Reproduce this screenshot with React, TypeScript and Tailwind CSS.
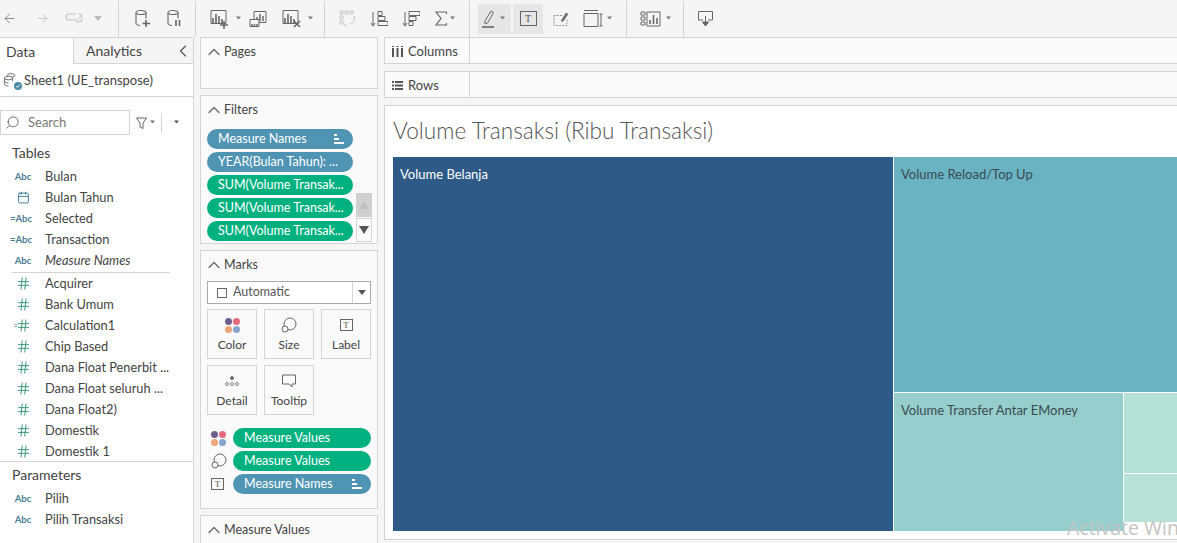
import React from 'react';
import { ArrowLeft, ArrowRight, ChevronLeft, ChevronUp, Search, Calendar, Hash } from 'lucide-react';

const Caret = ({ color = '#777' }: { color?: string }) => (
  <svg width="8" height="5" viewBox="0 0 8 5" className="ml-px"><path d="M0 0h8L4 5z" fill={color} /></svg>
);

const SmallCaret = ({ color = '#777' }: { color?: string }) => (
  <svg width="8" height="5" viewBox="0 0 8 5" className="ml-px"><path d="M1 .5h5L3.500 3.500z" fill={color} /></svg>
);

const Sep = ({ ml }: { ml: string }) => <div className={`h-9 w-px bg-[#d4d4d4] ${ml}`} />;

const DbIcon = ({ kind }: { kind: 'add' | 'pause' }) => (
  <svg width="16" height="20" viewBox="0 0 16 20" fill="none" stroke="#666" strokeWidth="1.1">
    <ellipse cx="6" cy="3.500" rx="5" ry="2" />
    <path d="M1 3.500v11c0 1 2 2 4 2M11 3.500v6" />
    {kind === 'add' ? (
      <path d="M11 11v7M7.500 14.500h7.500" strokeWidth="1.6" />
    ) : (
      <path d="M9 11v6M12.500 11v6" strokeWidth="1.6" />
    )}
  </svg>
);

const SheetBars = () => (
  <path d="M3 15V9M6 15V5M9 15V7M12 15V10" stroke="#666" strokeWidth="1.6" />
);

const Toolbar = () => (
  <div className="flex h-[37px] items-center bg-[#f5f5f5]">
    <ArrowLeft size={15} strokeWidth={1.2} color="#666" className="ml-[2px]" />
    <ArrowRight size={15} strokeWidth={1.2} color="#bbb" className="ml-[18px]" />
    <svg width="19" height="12" viewBox="0 0 19 12" fill="none" stroke="#c4c4c4" strokeWidth="1.1" className="ml-[15px]">
      <path d="M14 7H4a3 3 0 0 1 0-6h7M11 9h3a3 3 0 0 0 3-3V5M14 0l3 3-3 2" />
    </svg>
    <div className="ml-[9px]"><Caret color="#bbb" /></div>
    <Sep ml="ml-[16px]" />
    <div className="ml-[16px] flex"><DbIcon kind="add" /></div>
    <div className="ml-[16px] flex"><DbIcon kind="pause" /></div>
    <Sep ml="ml-[12px]" />
    <svg width="24" height="20" viewBox="0 0 24 20" fill="none" stroke="#666" className="ml-[14px]">
      <path d="M1 1.500h15v13H1z" />
      <SheetBars />
      <path d="M14 12v8M10 16h8" strokeWidth="1.6" />
    </svg>
    <SmallCaret />
    <svg width="18" height="18" viewBox="0 0 18 18" fill="none" stroke="#666" className="ml-[6px]">
      <path d="M5 1.500h12v11H5z" fill="#f5f5f5" />
      <path d="M8 11V7M11 11V4M14 11V6" strokeWidth="1.5" />
      <path d="M1 9.500h9v7H1z" fill="#f5f5f5" />
      <path d="M3 16v-2M5.500 16v-2M8 16v-2" strokeWidth="1.5" />
    </svg>
    <svg width="24" height="20" viewBox="0 0 24 20" fill="none" stroke="#666" className="ml-[15px]">
      <path d="M1 1.500h15v13H1z" />
      <SheetBars />
      <path d="M12 12l6 6M18 12l-6 6" strokeWidth="1.6" />
    </svg>
    <SmallCaret />
    <Sep ml="ml-[9px]" />
    <svg width="17" height="17" viewBox="0 0 17 17" fill="none" stroke="#c4c4c4" className="ml-[14px]">
      <path d="M1 1h3v3H1zM6 1h3v3H6zM11 1h3v3h-3zM1 6h3v3H1zM1 11h3v3H1z" />
      <path d="M15 7c1 3 0 6-4 7M15 6l1 2M5 16l3-2" />
    </svg>
    <svg width="18" height="18" viewBox="0 0 18 18" fill="none" stroke="#666" className="ml-[14px]">
      <path d="M3 2v14M1 13l2 3 2-3" />
      <path d="M8 1.500h4v4H8zM8 6.500h7v4H8zM8 11.500h10v4H8z" />
    </svg>
    <svg width="18" height="18" viewBox="0 0 18 18" fill="none" stroke="#666" className="ml-[14px]">
      <path d="M3 2v14M1 13l2 3 2-3" />
      <path d="M7 1.500h11v4H7zM7 6.500h7v4H7zM7 11.500h4v4H7z" />
    </svg>
    <svg width="12" height="15" viewBox="0 0 12 15" fill="none" stroke="#666" strokeWidth="1.2" className="ml-[15px]">
      <path d="M11.500 3V1H1l5 6.500L1 14h10.500v-2" />
    </svg>
    <div className="ml-px"><SmallCaret /></div>
    <Sep ml="ml-[12px]" />
    <div className="ml-[8px] flex h-[30px] w-[33px] items-center justify-center bg-[#e6e6e6]">
      <svg width="16" height="19" viewBox="0 0 16 19" fill="none" stroke="#666">
        <path d="M3 12L9 2l2.500 1.500L6 13.500 3 15z" />
        <path d="M0 18h12" strokeWidth="1.6" />
      </svg>
      <SmallCaret />
    </div>
    <div className="ml-[2px] flex h-[30px] w-[30px] items-center justify-center bg-[#e6e6e6]">
      <div className="flex h-[15px] w-[17px] items-center justify-center border border-[#666] text-[10px] leading-none text-[#555] [font-family:'Liberation_Serif',serif]">T</div>
    </div>
    <svg width="16" height="16" viewBox="0 0 16 16" fill="none" stroke="#999" className="ml-[10px]">
      <path d="M1 4.500h9M1 4.500v10h13V8" strokeDasharray="2 1" />
      <path d="M8 10l5-8 2 1-5 7.500z" fill="#666" stroke="#666" strokeWidth="0.5" />
    </svg>
    <svg width="20" height="17" viewBox="0 0 20 17" fill="none" stroke="#666" className="ml-[14px]">
      <path d="M1 3.500h14v13H1zM1 .5h14M18 4v12M16.500 4h3M16.500 16h3" />
    </svg>
    <div className="ml-[2px]"><SmallCaret /></div>
    <Sep ml="ml-[12px]" />
    <svg width="21" height="16" viewBox="0 0 21 16" fill="none" stroke="#666" className="ml-[13px]">
      <path d="M1 1h4v3H1zM1 6h4v3H1zM1 11h4v3H1zM7 1h13v14H7z" />
      <path d="M10 13V9M13.500 13V4M17 13V7" strokeWidth="1.6" />
    </svg>
    <div className="ml-[3px]"><SmallCaret /></div>
    <Sep ml="ml-[10px]" />
    <svg width="15" height="16" viewBox="0 0 15 16" fill="none" stroke="#666" className="ml-[14px]">
      <path d="M5 9H.5V.5h14V9H10" />
      <path d="M7.500 5v8" />
      <path d="M4.500 11h6l-3 4z" fill="#666" />
    </svg>
  </div>
);

type FieldKind = 'abc' | 'date' | 'calcAbc' | 'num' | 'calcNum';

const FieldIcon = ({ kind }: { kind: FieldKind }) => {
  if (kind === 'date') return <Calendar size={13} strokeWidth={1.8} color="#3f7f9a" className="mx-auto" />;
  if (kind === 'num' || kind === 'calcNum') {
    return (
      <div className="relative flex items-center justify-center">
        {kind === 'calcNum' && <span className="absolute left-[1px] text-[9px] leading-none text-[#39926e]">=</span>}
        <Hash size={15} strokeWidth={1.6} color="#3d9a78" />
      </div>
    );
  }
  return (
    <div className="text-center text-[9.5px] font-bold leading-none text-[#4a7c94]">
      {kind === 'calcAbc' && <span className="-ml-1">=</span>}Abc
    </div>
  );
};

const FieldRow = ({ kind, name, italic }: { kind: FieldKind; name: string; italic?: boolean }) => (
  <div className="flex h-[21px] items-center pl-[12px]">
    <div className="w-[22px]"><FieldIcon kind={kind} /></div>
    <span className={`ml-[11px] whitespace-nowrap text-[12.800px] text-[#444] ${italic ? 'italic' : ''}`}>{name}</span>
  </div>
);

const DataPane = () => (
  <div className="flex h-[506px] w-[194px] shrink-0 flex-col border-r border-[#d4d4d4] bg-white">
    <div className="flex h-[27px] shrink-0 bg-[#f5f5f5] pt-0 text-[14px] text-[#444]">
      <div className="flex w-[74px] items-center border-t border-r border-[#d4d4d4] bg-white pl-[6px] pt-px">Data</div>
      <div className="flex flex-1 items-center justify-between border-y border-[#d4d4d4] pl-[12px]">
        Analytics
        <ChevronLeft size={20} strokeWidth={1.4} color="#555" />
      </div>
    </div>
    <div className="flex h-[33px] shrink-0 items-center border-b border-[#d4d4d4] pl-[3px] pt-px text-[13px] text-[#444]">
      <div className="relative h-[16px] w-[16px]">
        <svg width="16" height="16" viewBox="0 0 16 16" fill="none" stroke="#666" strokeWidth="0.9">
          <ellipse cx="8" cy="2.500" rx="4" ry="1.800" />
          <ellipse cx="5.500" cy="5" rx="4" ry="1.800" fill="#fff" />
          <path d="M1.500 5v6c0 1 2 2 4 2M9.500 5v3" />
          <path d="M1.500 8c0 1 2 2 4 2" />
        </svg>
        <div className="absolute bottom-[-1px] right-[-3px] flex h-[8px] w-[8px] items-center justify-center rounded-full bg-[#4a8bab]">
          <svg width="6" height="6" viewBox="0 0 6 6" fill="none" stroke="#fff"><path d="M1 3l1.500 1.500L5 1.500" /></svg>
        </div>
      </div>
      <span className="ml-[5px]">Sheet1 (UE_transpose)</span>
    </div>
    <div className="mt-[13px] flex h-[25px] shrink-0 items-center">
      <div className="flex h-[25px] w-[130px] items-center border border-[#d4d4d4] pl-[4px] text-[13px] text-[#777]">
        <Search size={15} strokeWidth={1.3} color="#555" className="-scale-x-100" />
        <span className="ml-[8px]">Search</span>
      </div>
      <svg width="11" height="12" viewBox="0 0 11 12" fill="none" stroke="#666" className="ml-[6px]">
        <path d="M.5 1h10L7 6v5.500L4 10V6z" />
      </svg>
      <div className="ml-px"><SmallCaret /></div>
      <div className="ml-[4px] h-[20px] w-px bg-[#d4d4d4]" />
      <div className="ml-[10px]"><SmallCaret color="#555" /></div>
    </div>
    <div className="mt-[8px] pl-[12px] text-[14px] leading-[20px] text-[#444]">Tables</div>
    <div className="mt-[3px]">
      <FieldRow kind="abc" name="Bulan" />
      <FieldRow kind="date" name="Bulan Tahun" />
      <FieldRow kind="calcAbc" name="Selected" />
      <FieldRow kind="calcAbc" name="Transaction" />
      <FieldRow kind="abc" name="Measure Names" italic />
      <div className="ml-[12px] mt-px w-[158px] border-t border-[#d4d4d4]" />
      <FieldRow kind="num" name="Acquirer" />
      <FieldRow kind="num" name="Bank Umum" />
      <FieldRow kind="calcNum" name="Calculation1" />
      <FieldRow kind="num" name="Chip Based" />
      <FieldRow kind="num" name="Dana Float Penerbit ..." />
      <FieldRow kind="num" name="Dana Float seluruh ..." />
      <FieldRow kind="num" name="Dana Float2)" />
      <FieldRow kind="num" name="Domestik" />
      <FieldRow kind="num" name="Domestik 1" />
    </div>
    <div className="-mt-px border-t border-[#d4d4d4] pl-[12px] pt-[3px] text-[14px] leading-[20px] text-[#444]">Parameters</div>
    <div className="mt-[3px]">
      <FieldRow kind="abc" name="Pilih" />
      <FieldRow kind="abc" name="Pilih Transaksi" />
    </div>
  </div>
);

const CardTitle = ({ title }: { title: string }) => (
  <div className="flex h-[27px] items-center pl-[3px] pt-px text-[12.500px] text-[#444]">
    <ChevronUp size={20} strokeWidth={1.5} color="#666" />
    <span>{title}</span>
  </div>
);

const SortMark = () => (
  <svg width="10" height="10" viewBox="0 0 10 10" fill="#fff"><path d="M0 0h3v2H0zM0 4h5v2H0zM0 8h10v2H0z" /></svg>
);

const Pill = ({ label, color, sort, w }: { label: string; color: 'blue' | 'green'; sort?: boolean; w: string }) => (
  <div className={`flex h-[20px] items-center justify-between rounded-full pl-[11px] pr-[9px] text-[12.500px] leading-none text-white ${w} ${color === 'blue' ? 'bg-[#4f94b3]' : 'bg-[#00b180]'}`}>
    <span className="whitespace-nowrap">{label}</span>
    {sort && <SortMark />}
  </div>
);

const ColorDots = () => (
  <div className="grid h-[15px] w-[15px] grid-cols-2 gap-px">
    <div className="rounded-full bg-[#6f5f8f]" />
    <div className="rounded-full bg-[#e26a7a]" />
    <div className="rounded-full bg-[#eda57a]" />
    <div className="rounded-full bg-[#86a5cd]" />
  </div>
);

const SizeIcon = () => (
  <svg width="16" height="16" viewBox="0 0 16 16" fill="none" stroke="#666"><circle cx="9" cy="7" r="6" /><circle cx="4" cy="12" r="3" fill="#fafafa" /></svg>
);

const LabelIcon = () => (
  <div className="flex h-[12px] w-[13px] items-center justify-center border border-[#666] text-[9px] leading-none text-[#555] [font-family:'Liberation_Serif',serif]">T</div>
);

const MarkCard = ({ icon, label }: { icon: React.ReactNode; label: string }) => (
  <div className="flex h-[50px] w-[50px] flex-col items-center border border-[#d4d4d4] text-[12px] text-[#444]">
    <div className="mt-[7px] flex h-[16px] items-center">{icon}</div>
    <div className="mt-[4px] leading-[16px]">{label}</div>
  </div>
);

const Card = ({ className, children }: { className: string; children: React.ReactNode }) => (
  <div className={`border border-[#d4d4d4] bg-[#fafafa] ${className}`}>{children}</div>
);

const EncodingRow = ({ icon, label, color, sort }: { icon: React.ReactNode; label: string; color: 'blue' | 'green'; sort?: boolean }) => (
  <div className="flex items-center">
    <div className="flex w-[22px] justify-start">{icon}</div>
    <Pill label={label} color={color} sort={sort} w="w-[138px]" />
  </div>
);

const MiddlePane = () => (
  <div className="flex h-[506px] w-[178px] shrink-0 flex-col gap-[6px] overflow-hidden">
    <Card className="h-[52px] shrink-0"><CardTitle title="Pages" /></Card>
    <Card className="h-[149px] shrink-0">
      <CardTitle title="Filters" />
      <div className="relative mt-[6px] flex flex-col gap-[3px] pl-[6px]">
        <Pill label="Measure Names" color="blue" sort w="w-[146px]" />
        <Pill label="YEAR(Bulan Tahun): ..." color="blue" w="w-[146px]" />
        <Pill label="SUM(Volume Transak..." color="green" w="w-[146px]" />
        <Pill label="SUM(Volume Transak..." color="green" w="w-[146px]" />
        <Pill label="SUM(Volume Transak..." color="green" w="w-[146px]" />
        <div className="absolute right-[5px] top-[64px] flex h-[24px] w-[16px] items-center justify-center bg-[#d0d0d0]">
          <svg width="10" height="8" viewBox="0 0 10 8"><path d="M5 0l5 8H0z" fill="#c0c0c0" /></svg>
        </div>
        <div className="absolute right-[5px] top-[89px] flex h-[24px] w-[16px] items-center justify-center border border-[#d4d4d4]">
          <svg width="10" height="8" viewBox="0 0 10 8"><path d="M0 0h10L5 8z" fill="#555" /></svg>
        </div>
      </div>
    </Card>
    <Card className="h-[259px] shrink-0">
      <CardTitle title="Marks" />
      <div className="mx-[6px] mt-[3px] flex h-[23px] items-center border border-[#aaa] bg-white pl-[9px] text-[12.500px] text-[#555]">
        <div className="h-[10px] w-[10px] border border-[#666]" />
        <span className="ml-[6px] flex-1">Automatic</span>
        <div className="flex h-full w-[18px] items-center justify-center border-l border-[#d4d4d4]"><Caret color="#555" /></div>
      </div>
      <div className="ml-[6px] mt-[5px] grid w-[164px] grid-cols-3 gap-x-[7px] gap-y-[6px]">
        <MarkCard icon={<ColorDots />} label="Color" />
        <MarkCard icon={<SizeIcon />} label="Size" />
        <MarkCard icon={<LabelIcon />} label="Label" />
        <MarkCard
          icon={
            <svg width="14" height="12" viewBox="0 0 14 12" fill="none" stroke="#666" strokeWidth="0.8">
              <circle cx="7" cy="3" r="1.500" fill="#666" /><circle cx="2" cy="9" r="1.500" /><circle cx="7" cy="9" r="1.500" /><circle cx="12" cy="9" r="1.500" />
            </svg>
          }
          label="Detail"
        />
        <MarkCard
          icon={
            <svg width="14" height="14" viewBox="0 0 14 14" fill="none" stroke="#666"><path d="M.5 1h13v9H10v3L7 10H.5z" /></svg>
          }
          label="Tooltip"
        />
      </div>
      <div className="mt-[13px] flex flex-col gap-[3px] pl-[10px]">
        <EncodingRow icon={<ColorDots />} label="Measure Values" color="green" />
        <EncodingRow icon={<SizeIcon />} label="Measure Values" color="green" />
        <EncodingRow icon={<LabelIcon />} label="Measure Names" color="blue" sort />
      </div>
    </Card>
    <Card className="h-[40px] shrink-0"><CardTitle title="Measure Values" /></Card>
  </div>
);

const Shelf = ({ icon, label }: { icon: React.ReactNode; label: string }) => (
  <div className="flex h-[27px] shrink-0 border-y border-l border-[#d4d4d4] bg-[#fafafa] text-[13px] text-[#444]">
    <div className="flex w-[85px] items-center border-r border-[#d4d4d4] pl-[7px] pt-[2px]">
      {icon}
      <span className="ml-[5px]">{label}</span>
    </div>
  </div>
);

const Treemap = () => (
  <div className="flex h-[374px] text-[13px]">
    <div className="w-[500px] shrink-0 bg-[#2d5a87] pl-[7px] pt-[8px] text-white">Volume Belanja</div>
    <div className="ml-px flex flex-1 flex-col">
      <div className="h-[235px] bg-[#69b3c3] pl-[7px] pt-[8px] text-[#3c4a50]">Volume Reload/Top Up</div>
      <div className="mt-px flex flex-1">
        <div className="w-[229px] shrink-0 bg-[#95cecc] pl-[7px] pt-[8px] text-[#3c4a50]">Volume Transfer Antar EMoney</div>
        <div className="ml-px flex flex-1 flex-col">
          <div className="h-[80px] bg-[#b5e0d5]" />
          <div className="mt-px h-[48px] bg-[#b9e2d7]" />
        </div>
      </div>
    </div>
  </div>
);

const ViewPane = () => (
  <div className="relative flex h-[506px] min-w-0 flex-1 flex-col overflow-hidden">
    <div className="flex flex-col gap-[7px]">
      <Shelf
        label="Columns"
        icon={<svg width="11" height="11" viewBox="0 0 11 11" fill="#555"><path d="M0 2h2v9H0zM4.500 2h2v9h-2zM9 2h2v9H9zM0 0h2v1H0zM4.500 0h2v1h-2zM9 0h2v1H9z" /></svg>}
      />
      <Shelf
        label="Rows"
        icon={<svg width="11" height="11" viewBox="0 0 11 11" fill="#555"><path d="M3 1h8v2H3zM3 4.500h8v2H3zM3 8h8v2H3zM0 1h2v2H0zM0 4.500h2v2H0zM0 8h2v2H0z" /></svg>}
      />
    </div>
    <div className="mt-[7px] h-[435px] border-y border-l border-[#d4d4d4] bg-white pl-[8px]">
      <div className="flex h-[51px] items-center pb-px text-[22.600px] font-light text-[#555]">Volume Transaksi (Ribu Transaksi)</div>
      <Treemap />
    </div>
    <div className="absolute bottom-[1px] left-[683px] whitespace-nowrap text-[19.500px] text-[#c4c4c4] [font-family:'Open_Sans',sans-serif]">Activate Win</div>
  </div>
);

export default function App() {
  return (
    <div className="h-[543px] w-[1177px] overflow-hidden bg-[#f5f5f5] [font-family:Lato,sans-serif]">
      <Toolbar />
      <div className="flex">
        <DataPane />
        <div className="ml-[6px]"><MiddlePane /></div>
        <div className="ml-[6px] flex min-w-0 flex-1"><ViewPane /></div>
      </div>
    </div>
  );
}
